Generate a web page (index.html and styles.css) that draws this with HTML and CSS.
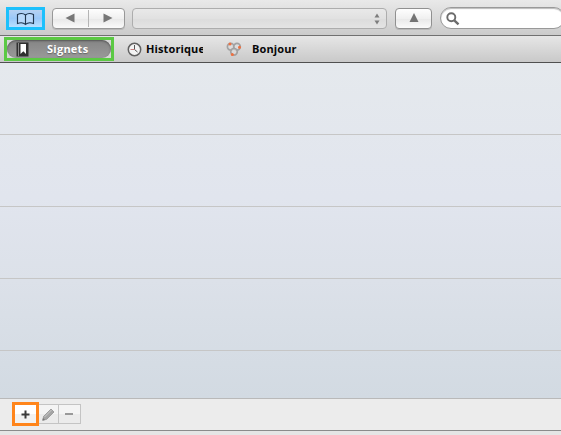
FILE: index.html
```html
<!DOCTYPE html>
<html lang="fr">
<head>
<meta charset="utf-8">
<title>Signets</title>
<link rel="stylesheet" href="styles.css">
</head>
<body>
<header class="toolbar">
  <button class="book" aria-label="Signets"><svg width="19" height="14" viewBox="0 0 19 14"><path d="M9.500 3C7.500 1.300 4 1.300 1.500 2.500v9c2.500-1 6-.9 8 .9 2-1.800 5.500-1.900 8-.9v-9C15 1.300 11.500 1.300 9.500 3zM9.500 3v9" fill="#b9d8fa" stroke="#20364f" stroke-width="1.150"/></svg></button>
  <div class="nav">
    <button aria-label="Précédent"><svg width="10" height="10"><path d="M9.500 .5v9L.5 5z" fill="#777"/></svg></button>
    <button aria-label="Suivant"><svg width="10" height="10"><path d="M.5 .5v9L9.500 5z" fill="#777"/></svg></button>
  </div>
  <div class="location"><svg width="6" height="12"><path d="M.5 4.500h5L3 .5zM.5 7.500h5L3 11.500z" fill="#7d7d7d"/></svg></div>
  <button class="up" aria-label="Remonter"><svg width="10" height="10"><path d="M.5 9h9L5 0z" fill="#737373"/></svg></button>
  <div class="search"><svg width="14" height="14"><circle cx="5.300" cy="5.300" r="4" fill="none" stroke="#6c6c6c" stroke-width="1.900"/><path d="M8.300 8.300l4.200 4" stroke="#6c6c6c" stroke-width="2.400"/></svg></div>
</header>
<nav class="tabs">
  <div class="frame"><div class="selected">
    <svg width="13" height="15"><path d="M.5.500h12v14H.5z" fill="#303030"/><path d="M2.500 1v13" stroke="#888"/><path d="M4.500 2h5.500v10L7.300 9.300 4.500 12z" fill="#fff"/></svg>
    <span>Signets</span>
  </div></div>
  <svg class="clock" width="15" height="15"><circle cx="7.500" cy="7.500" r="6.200" fill="#f4f4f4" stroke="#626262" stroke-width="1.500"/><path d="M7.500 3v4.500l3 2.500" fill="none" stroke="#555"/><path d="M3.500 7.500h4" stroke="#c98080"/></svg>
  <span class="history">Historique</span>
  <svg class="rings" width="16" height="15"><g fill="#dedede" fill-opacity=".6" stroke="#a2a2a2" stroke-width="1.700"><circle cx="4.700" cy="4.700" r="3.300"/><circle cx="11" cy="4.700" r="3.300"/><circle cx="8" cy="9.800" r="3.300"/></g><g fill="#ef7040"><circle cx="4" cy="1.900" r="1.500"/><circle cx="13.500" cy="5.200" r="1.500"/><circle cx="6.300" cy="12.400" r="1.500"/></g></svg>
  <span class="bonjour">Bonjour</span>
</nav>
<main class="list">
  <div class="row"></div><div class="row"></div><div class="row"></div><div class="row"></div>
</main>
<footer class="bottom">
  <div class="actions">
    <button class="add" aria-label="Ajouter"><svg width="9" height="9"><path d="M.5 4.500h8M4.500.500v8" stroke="#3b3b3b" stroke-width="2"/></svg></button>
    <button class="edit" aria-label="Modifier"><svg width="13" height="13"><path d="M.7 12.300l1-4L9 1l3 3-7.300 7.300z" fill="#a4a4a4" stroke="#929292" stroke-width=".8"/><path d="M2.500 9L9.500 2" stroke="#ccc"/><path d="M.5 12.500L1 10l2 2z" fill="#777"/></svg></button>
    <button class="remove" aria-label="Supprimer"><svg width="8" height="2"><path d="M0 1h8" stroke="#999" stroke-width="2"/></svg></button>
  </div>
</footer>
</body>
</html>
```

FILE: styles.css
```css
* { box-sizing: border-box; }
body {
  margin: 0;
  height: 435px;
  overflow: hidden;
  background: #e5e5e5;
  font: bold 11px/14px "Open Sans", "Noto Sans", sans-serif;
  color: #080808;
}
svg { display: block; flex: none; }
button { margin: 0; padding: 0; border: 0; background: none; display: flex; align-items: center; justify-content: center; }
.toolbar {
  display: flex;
  align-items: flex-start;
  height: 36px;
  padding: 7px 0 0 6px;
  border-bottom: 1px solid #707070;
  background: linear-gradient(#e9e9e9, #cbcbcb);
  overflow: hidden;
}
.toolbar > * { flex: none; }
.book {
  width: 39px;
  height: 23px;
  border: 3px solid #1dc0fc;
  background: linear-gradient(#b7d2f2, #9ac8f9 50%, #b9e0ff);
}
.nav {
  display: flex;
  width: 73px;
  height: 21px;
  margin: 1px 7px 0;
  border: 1px solid #989898;
  border-radius: 4px;
  background: linear-gradient(#fefefe, #f0f0f0 50%, #e8e8e8 51%, #fafafa);
  box-shadow: 0 1px 0 #b8b8b8;
}
.nav button { width: 35px; padding: 0 2px 1px 0; }
.nav button + button { width: 36px; padding: 0 0 1px 2px; border-left: 1px solid #b5b5b5; border-image: linear-gradient(transparent 10%, #b5b5b5 10%, #b5b5b5 90%, transparent 90%) 1; }
.location {
  display: flex;
  align-items: center;
  justify-content: flex-end;
  width: 255px;
  height: 21px;
  margin-top: 1px;
  padding-right: 6px;
  border: 1px solid #adadad;
  border-radius: 4px;
  background: linear-gradient(#e9e9e9, #e1e1e1 50%, #dcdcdc 51%, #e4e4e4);
}
.up {
  width: 37px;
  height: 21px;
  margin: 1px 8px 0;
  padding-bottom: 1px;
  border: 1px solid #909090;
  border-radius: 4px;
  background: linear-gradient(#fefefe, #f0f0f0 50%, #e8e8e8 51%, #fafafa);
  box-shadow: 0 1px 0 #b8b8b8;
}
.search {
  width: 125px;
  height: 22px;
  padding: 4px 0 0 5px;
  border: 1px solid #999;
  border-radius: 11px;
  background: #fff;
  box-shadow: inset 0 1px 1px #bbb;
}
.tabs {
  display: flex;
  align-items: center;
  height: 27px;
  padding-left: 4px;
  border-bottom: 1px solid #505050;
  background: linear-gradient(#e6e6e6, #c9c9c9);
}
.frame { width: 110px; height: 24px; border: 3px solid #5bc944; background: #d6d6d6; }
.selected {
  display: flex;
  align-items: center;
  height: 18px;
  padding-left: 9px;
  border-radius: 9px;
  background: linear-gradient(#858585, #999);
  box-shadow: inset 0 1px 2px #555;
  color: #fff;
  text-shadow: 0 1px 1px #666;
}
.selected span { margin-left: 18px; letter-spacing: .25px; }
.clock { margin-left: 13px; }
.history { width: 57px; margin-left: 4px; overflow: hidden; white-space: nowrap; letter-spacing: .12px; }
.rings { margin-left: 23px; }
.bonjour { margin-left: 10px; letter-spacing: .12px; }
.list { height: 336px; border-bottom: 1px solid #b9b9b9; background: linear-gradient(#e5e9ed, #e1e5ee 40%, #dce1e9 65%, #d2dae2); }
.row { height: 72px; border-bottom: 1px solid #c6c6c6; }
.bottom { height: 32px; padding: 3px 0 0 12px; border-bottom: 1px solid #8b8b8b; background: #ececec; }
.actions { display: flex; align-items: center; height: 24px; }
.add { width: 27px; height: 24px; border: 3px solid #ff851b; background: linear-gradient(#fff 50%, #f2f2f2 50%); }
.edit, .remove { height: 20px; border: 1px solid #c4c4c4; border-left: 0; background: linear-gradient(#f4f4f4 50%, #ebebeb 50%); }
.edit { width: 20px; }
.remove { width: 22px; padding-right: 1px; }
```
